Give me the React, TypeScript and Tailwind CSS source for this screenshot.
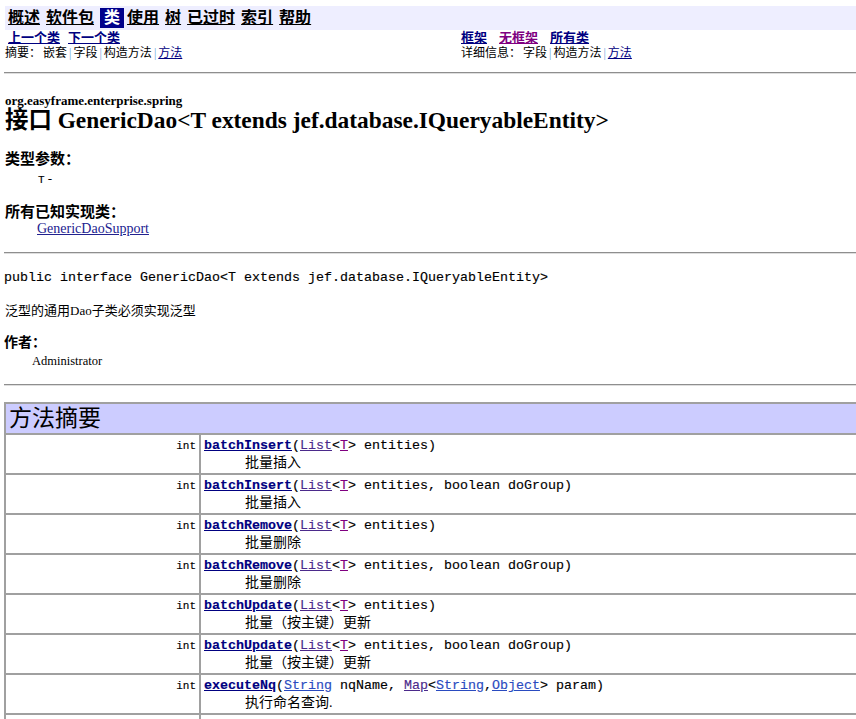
import React from "react";

type Kind = "name" | "vis" | "tp" | "link";
type Seg = [string, Kind?];

const serif = "font-['Liberation_Serif','Noto_Sans_CJK_SC',serif]";
const mono = "font-['Liberation_Mono','Noto_Sans_CJK_SC',monospace] [-webkit-text-stroke:0.15px_currentColor]";
const sans = "font-['Liberation_Sans','Noto_Sans_CJK_SC',sans-serif]";

const kindClass: Record<Kind, string> = {
  name: "font-bold text-[#000080] underline",
  vis: "text-[#4b2a8b] underline",
  tp: "text-[#800080] underline",
  link: "text-[#2a4bc0] underline",
};

const listT: Seg[] = [["("], ["List", "vis"], ["<"], ["T", "tp"], [">"]];

const rows: { sig: Seg[]; desc: string }[] = [
  { sig: [["batchInsert", "name"], ...listT, [" entities)"]], desc: "批量插入" },
  { sig: [["batchInsert", "name"], ...listT, [" entities, boolean doGroup)"]], desc: "批量插入" },
  { sig: [["batchRemove", "name"], ...listT, [" entities)"]], desc: "批量删除" },
  { sig: [["batchRemove", "name"], ...listT, [" entities, boolean doGroup)"]], desc: "批量删除" },
  { sig: [["batchUpdate", "name"], ...listT, [" entities)"]], desc: "批量（按主键）更新" },
  { sig: [["batchUpdate", "name"], ...listT, [" entities, boolean doGroup)"]], desc: "批量（按主键）更新" },
  {
    sig: [
      ["executeNq", "name"],
      ["("],
      ["String", "link"],
      [" nqName, "],
      ["Map", "vis"],
      ["<"],
      ["String", "link"],
      [","],
      ["Object", "link"],
      ["> param)"],
    ],
    desc: "执行命名查询.",
  },
];

function Hr() {
  return <div className="h-[2px] border-t border-b border-t-[#8e8e8e] border-b-[#dedede]" />;
}

function Sep() {
  return <span className="mx-[2px] text-[#6fa3d9]">|</span>;
}

function MethodRow({ sig, desc }: { sig?: Seg[]; desc?: string }) {
  return (
    <div className="flex">
      <div className="w-[195px] shrink-0 border border-[#a0a0a0] p-[3px] text-right">
        <div className={`${mono} h-[16px] text-[11px] leading-[16px]`}>{sig ? "int" : ""}</div>
      </div>
      <div className="flex-1 border border-[#a0a0a0] p-[3px]">
        <div className={`${mono} h-[16px] whitespace-pre text-[13.33px] leading-[16px]`}>
          {sig?.map(([t, k], i) => (
            <span key={i} className={k ? kindClass[k] : ""}>
              {t}
            </span>
          ))}
        </div>
        <div className="h-[16px] pl-[41px] pt-[1px] text-[14px] leading-[15px]">{desc}</div>
      </div>
    </div>
  );
}

export default function App() {
  const navItems = ["概述", "软件包", "类", "使用", "树", "已过时", "索引", "帮助"];

  return (
    <div className={`h-[719px] w-full overflow-hidden bg-white text-black ${serif}`}>
      <div className="w-[900px] pl-[4px]">
        {/* Top nav bar */}
        <div className={`ml-[1px] mt-[6px] flex h-[24px] items-start bg-[#eeeeff] pl-[3px] pt-[2px] text-[16px] font-bold leading-[20px] ${sans}`}>
          {navItems.map((label, i) =>
            label === "类" ? (
              <span key={label} className="ml-[6px] bg-[#00008b] px-[4px] text-white">
                {label}
              </span>
            ) : (
              <a key={label} className={`underline ${i === 0 ? "" : i === 3 ? "ml-[3px]" : "ml-[6px]"}`}>
                {label}
              </a>
            )
          )}
        </div>

        {/* Prev / next and frames */}
        <div className={`flex h-[16px] text-[13px] font-bold leading-[16px] ${sans}`}>
          <div className="w-[457px] shrink-0 pl-[4px]">
            <a className="text-[#000080] underline">上一个类</a>
            <a className="ml-[8px] text-[#000080] underline">下一个类</a>
          </div>
          <div>
            <a className="text-[#000080] underline">框架</a>
            <a className="ml-[12px] text-[#800080] underline">无框架</a>
            <a className="ml-[12px] text-[#000080] underline">所有类</a>
          </div>
        </div>

        {/* Summary / detail */}
        <div className="flex h-[15px] text-[12px] leading-[15px]">
          <div className="w-[457px] shrink-0 pl-[1px]">
            摘要：<span className="ml-[2px]">嵌套</span>
            <Sep />
            字段
            <Sep />
            构造方法
            <Sep />
            <a className="text-[#000080] underline">方法</a>
          </div>
          <div>
            详细信息：<span className="ml-[2px]">字段</span>
            <Sep />
            构造方法
            <Sep />
            <a className="text-[#000080] underline">方法</a>
          </div>
        </div>

        <div className="mt-[11px]">
          <Hr />
        </div>

        {/* Class header */}
        <div className="mt-[21px] pl-[1px] text-[13px] font-bold leading-[12px]">org.easyframe.enterprise.spring</div>
        <h2 className="pl-[1px] text-[23.4px] font-bold leading-[26px]">
          接口 GenericDao&lt;T extends jef.database.IQueryableEntity&gt;
        </h2>

        <div className="mt-[17px] pl-[1px] text-[15px] font-bold leading-[18px]">类型参数：</div>
        <div className="mt-[4px] pl-[34px] text-[13px] leading-[14px]">
          <span className={`${mono} text-[11px]`}>T</span> -
        </div>

        <div className="mt-[16px] pl-[1px] text-[15px] font-bold leading-[18px]">所有已知实现类：</div>
        <div className="pl-[33px] text-[14px] leading-[16px]">
          <a className="text-[#22228f] underline">GenericDaoSupport</a>
        </div>

        <div className="mt-[15px]">
          <Hr />
        </div>

        <div className={`mt-[16px] whitespace-pre text-[13.33px] leading-[16px] ${mono}`}>
          public interface GenericDao&lt;T extends jef.database.IQueryableEntity&gt;
        </div>

        <div className="mt-[17px] pl-[1px] text-[13px] leading-[16px]">泛型的通用Dao子类必须实现泛型</div>

        <div className="mt-[15px] text-[14px] font-bold leading-[18px]">作者：</div>
        <div className="mt-[2px] pl-[28px] text-[12.5px] leading-[15px]">Administrator</div>

        <div className="mt-[15px]">
          <Hr />
        </div>

        {/* Method summary table */}
        <div className="mt-[16px] border border-[#a0a0a0]">
          <div className="border border-[#a0a0a0] bg-[#ccccff] px-[3px] py-[3px] text-[23px] leading-[23px]">
            方法摘要
          </div>
          {rows.map((r, i) => (
            <MethodRow key={i} sig={r.sig} desc={r.desc} />
          ))}
          <MethodRow />
        </div>
      </div>
    </div>
  );
}
